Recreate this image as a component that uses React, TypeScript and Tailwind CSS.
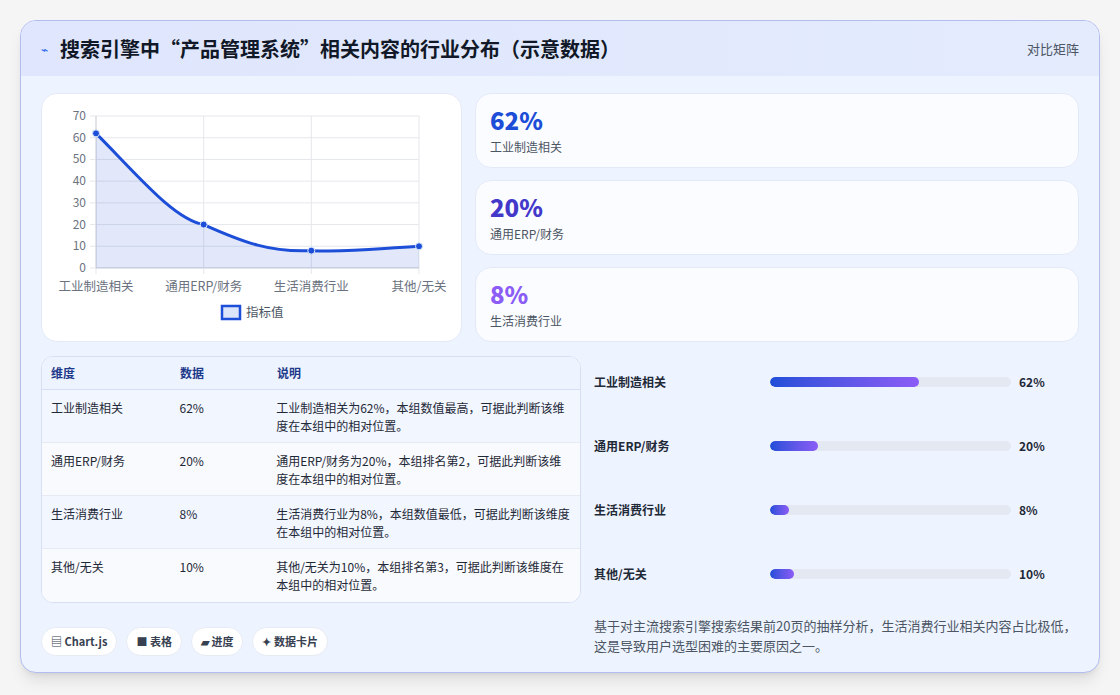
import React from "react";

const F = { fontFamily: '"Noto Sans CJK SC", "Noto Sans", sans-serif' };

const stats = [
  { v: "62%", l: "工业制造相关", c: "text-[#1d4ed8]" },
  { v: "20%", l: "通用ERP/财务", c: "text-[#4338ca]" },
  { v: "8%", l: "生活消费行业", c: "text-[#8b5cf6]" },
];
const rows = [
  ["工业制造相关", "62%", "工业制造相关为62%，本组数值最高，可据此判断该维度在本组中的相对位置。"],
  ["通用ERP/财务", "20%", "通用ERP/财务为20%，本组排名第2，可据此判断该维度在本组中的相对位置。"],
  ["生活消费行业", "8%", "生活消费行业为8%，本组数值最低，可据此判断该维度在本组中的相对位置。"],
  ["其他/无关", "10%", "其他/无关为10%，本组排名第3，可据此判断该维度在本组中的相对位置。"],
];
const bars = [
  ["工业制造相关", 62],
  ["通用ERP/财务", 20],
  ["生活消费行业", 8],
  ["其他/无关", 10],
] as const;

function Chart() {
  const x0 = 54, x1 = 377, yb = 174, yt = 22;
  const X = [54, 161.7, 269.3, 377];
  const Y = (v: number) => yb - (v / 70) * (yb - yt);
  const vals = [62, 20, 8, 10];
  const pts = vals.map((v, i) => [X[i], Y(v)]);
  const line = `M${pts[0][0]},${pts[0][1]} C${pts[0][0] + 40},${pts[0][1] + 40} ${pts[1][0] - 30},${pts[1][1] - 5} ${pts[1][0]},${pts[1][1]} C${pts[1][0] + 40},${pts[1][1] + 18} ${pts[2][0] - 40},${pts[2][1] + 2} ${pts[2][0]},${pts[2][1]} C${pts[2][0] + 40},${pts[2][1] + 2} ${pts[3][0] - 40},${pts[3][1] + 2} ${pts[3][0]},${pts[3][1]}`;
  return (
    <svg width="420" height="248" viewBox="0 0 420 248" style={{ fontFamily: '"Noto Sans CJK SC", sans-serif' }}>
      {[0, 10, 20, 30, 40, 50, 60, 70].map((v) => (
        <g key={v}>
          <line x1={x0 - 6} x2={x1} y1={Y(v)} y2={Y(v)} stroke="#e5e7eb" />
          <text x={x0 - 10} y={Y(v) + 4} textAnchor="end" fontSize="12" fill="#6b7280">{v}</text>
        </g>
      ))}
      {X.map((x, i) => (
        <line key={i} x1={x} x2={x} y1={yt} y2={yb + 6} stroke="#e5e7eb" />
      ))}
      <line x1={x0} x2={x0} y1={yt} y2={yb} stroke="#d1d5db" />
      <line x1={x0} x2={x1} y1={yb} y2={yb} stroke="#d1d5db" />
      <path d={`${line} L${x1},${yb} L${x0},${yb} Z`} fill="rgba(29,78,216,0.13)" />
      <path d={line} fill="none" stroke="#1d4ed8" strokeWidth="3" />
      {pts.map(([x, y], i) => (
        <circle key={i} cx={x} cy={y} r="3.5" fill="#1d4ed8" stroke="#dbeafe" strokeWidth="1" />
      ))}
      {["工业制造相关", "通用ERP/财务", "生活消费行业", "其他/无关"].map((t, i) => (
        <text key={t} x={X[i]} y={197} textAnchor="middle" fontSize="12.5" fill="#6b7280">{t}</text>
      ))}
      <rect x="180" y="212" width="18" height="13" fill="#dbe4f8" stroke="#1d4ed8" strokeWidth="2.5" />
      <text x="204" y="223" fontSize="12.5" fill="#4b5563">指标值</text>
    </svg>
  );
}

export default function App() {
  return (
    <div className="w-[1120px] h-[695px] bg-[#f5f5f6] pt-5 pl-5" style={F}>
      <div className="w-[1080px] h-[653px] rounded-2xl border border-[#b4bdf0] bg-[#eef4ff] overflow-hidden shadow-lg flex flex-col">
        <div className="h-[55px] shrink-0 flex items-center justify-between px-5 bg-gradient-to-r from-[#dfe6fd] to-[#e3ebfd]">
          <div className="flex items-center gap-3">
            <span className="text-[#2563eb] text-xs">⌁</span>
            <span className="text-[20px] font-bold text-[#111827]">搜索引擎中“产品管理系统”相关内容的行业分布（示意数据）</span>
          </div>
          <span className="text-[13px] text-[#4b5563]">对比矩阵</span>
        </div>
        <div className="flex-1 px-5 pt-[17px] flex flex-col">
          <div className="flex gap-[13px] h-[249px]">
            <div className="w-[421px] bg-white rounded-2xl border border-[#e3e9f7] overflow-hidden">
              <Chart />
            </div>
            <div className="flex-1 flex flex-col gap-[12px]">
              {stats.map((s) => (
                <div key={s.v} className="flex-1 bg-[#fbfcff] rounded-2xl border border-[#e3e9f7] px-[14px] flex flex-col justify-center">
                  <div className={`text-[24px] font-extrabold leading-7 ${s.c}`}>{s.v}</div>
                  <div className="text-[12px] text-[#4b5563] mt-1">{s.l}</div>
                </div>
              ))}
            </div>
          </div>
          <div className="flex gap-[13px] mt-[14px]">
            <div className="w-[540px] flex flex-col">
              <div className="rounded-xl border border-[#d6dff3] overflow-hidden bg-white h-[247px]">
                <div className="flex h-[33px] items-center text-[12px] font-semibold text-[#1e3a8a] bg-[#eef4ff] border-b border-[#d6dff3] px-[9px]">
                  <div className="w-[129px]">维度</div>
                  <div className="w-[97px]">数据</div>
                  <div>说明</div>
                </div>
                {rows.map((r, i) => (
                  <div key={i} className={`flex px-[9px] pt-[9px] h-[53px] text-[12px] text-[#1f2937] ${i % 2 ? "bg-[#f8fafd]" : "bg-[#f1f6ff]"} ${i < 3 ? "border-b border-[#e5eaf3]" : ""}`}>
                    <div className="w-[129px]">{r[0]}</div>
                    <div className="w-[97px]">{r[1]}</div>
                    <div className="w-[296px] leading-[18px]">{r[2]}</div>
                  </div>
                ))}
              </div>
              <div className="flex gap-[9px] mt-[24px]">
                {["▤ Chart.js", "■ 表格", "▰ 进度", "✦ 数据卡片"].map((t) => (
                  <span key={t} className="h-[29px] px-[9px] rounded-full bg-white border border-[#e5eaf3] text-[11px] font-bold text-[#374151] flex items-center">{t}</span>
                ))}
              </div>
            </div>
            <div className="flex-1 flex flex-col -mt-[6px]">
              <div className="flex flex-col">
                {bars.map(([l, v]) => (
                  <div key={l} className="h-[64px] flex items-center text-[12px] font-semibold text-[#1f2937]">
                    <div className="w-[176px]">{l}</div>
                    <div className="w-[241px] h-[10px] rounded-full bg-[#e3e8f1] overflow-hidden">
                      <div className="h-full rounded-full bg-gradient-to-r from-[#1d4ed8] to-[#8b5cf6]" style={{ width: `${v}%` }} />
                    </div>
                    <div className="ml-[8px] font-bold">{v}%</div>
                  </div>
                ))}
              </div>
              <p className="mt-[10px] text-[13px] leading-[20px] text-[#4b5563]">
                基于对主流搜索引擎搜索结果前20页的抽样分析，生活消费行业相关内容占比极低，这是导致用户选型困难的主要原因之一。
              </p>
            </div>
          </div>
        </div>
      </div>
    </div>
  );
}
